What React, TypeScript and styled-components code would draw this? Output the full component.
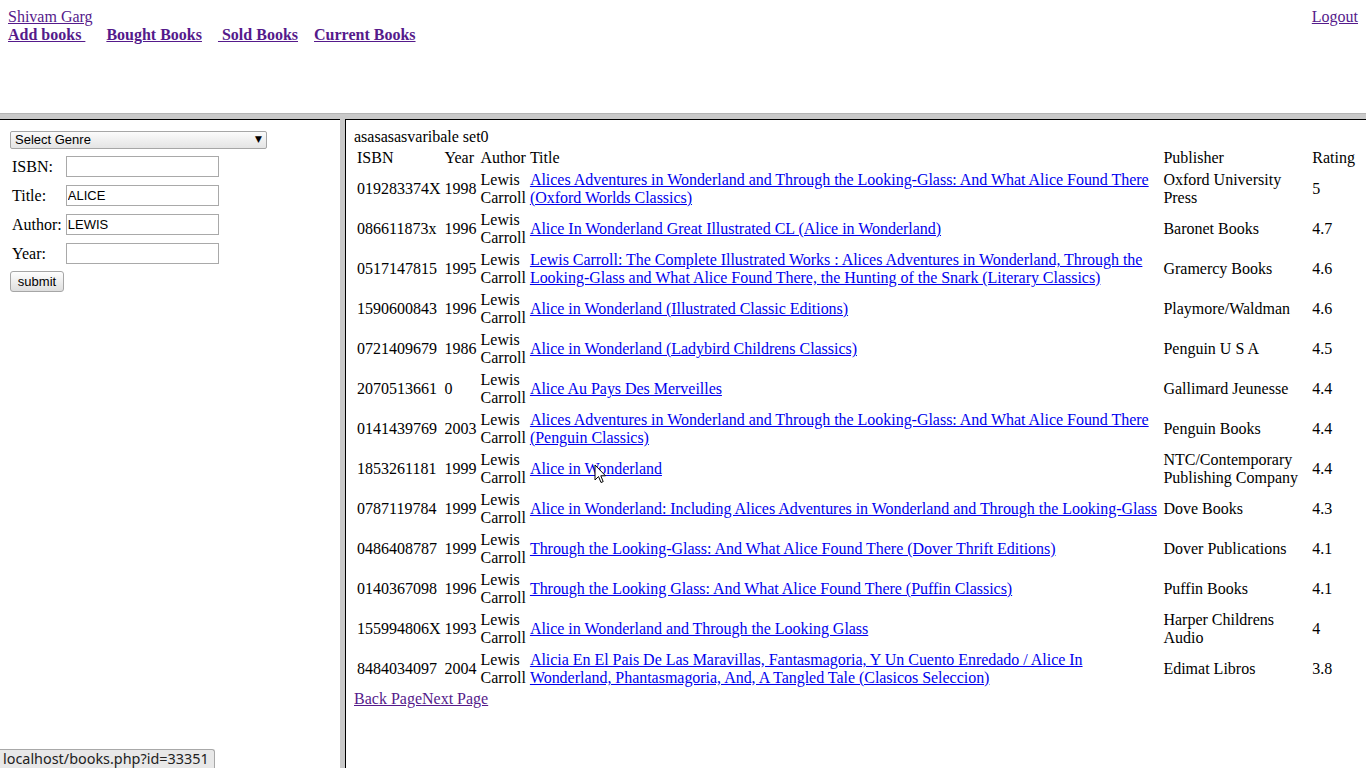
import React from "react";
import styled, { createGlobalStyle } from "styled-components";

const Global = createGlobalStyle`
  html, body { margin: 0; padding: 0; background: #fff; }
  body { font-family: "Liberation Serif", "Times New Roman", serif; font-size: 16px; color: #000; }
  #root { height: 768px; overflow: hidden; }
`;

const Page = styled.div`
  position: relative;
  height: 768px;
  display: flex;
  flex-direction: column;
  overflow: hidden;
`;

const TopFrame = styled.div`
  height: 113px;
  flex: none;
  padding: 8px;
  box-sizing: border-box;
  display: flex;
  justify-content: space-between;
  align-items: flex-start;
`;

const HBorder = styled.div`
  height: 6px;
  flex: none;
  background: #c9c9c9;
  border-top: 1px solid #b4b4b4;
  box-sizing: border-box;
`;

const Lower = styled.div`
  flex: 1;
  display: flex;
  min-height: 0;
`;

const LeftFrame = styled.div`
  width: 340px;
  flex: none;
  border-top: 1px solid #000;
  padding: 8px;
  box-sizing: border-box;
`;

const VBorder = styled.div`
  width: 5px;
  flex: none;
  background: #c9c9c9;
`;

const RightFrame = styled.div`
  flex: 1;
  border-top: 1px solid #000;
  border-left: 1px solid #000;
  padding: 8px;
  box-sizing: border-box;
  min-width: 0;
`;

const UserBlock = styled.div`
  display: flex;
  flex-direction: column;
  line-height: 18px;
`;

const Link = styled.a<{ $visited?: boolean }>`
  color: ${(p) => (p.$visited ? "#551a8b" : "#0000ee")};
  text-decoration: underline;
  cursor: pointer;
`;

const TitleLink = styled(Link)`
  letter-spacing: -0.03px;
`;

const NavRow = styled.div`
  white-space: pre;
`;

const NavLink = styled(Link)<{ $gap?: number }>`
  font-weight: bold;
  margin-left: ${(p) => p.$gap ?? 0}px;
`;

const GenreWrap = styled.div`
  position: relative;
  width: 257px;
  height: 18px;
  margin: 2px 2px 3px;
`;

const GenreSelect = styled.select`
  appearance: none;
  -webkit-appearance: none;
  width: 257px;
  height: 18px;
  box-sizing: border-box;
  margin: 0;
  padding: 0 0 0 4px;
  border: 1px solid #a6a6a6;
  border-radius: 2px;
  background: linear-gradient(#fbfbfb, #e4e4e4);
  font-family: "Liberation Sans", Arial, sans-serif;
  font-size: 13px;
  color: #000;
  outline: none;
`;

const Arrow = styled.span`
  position: absolute;
  right: 5px;
  top: 2px;
  font-family: "DejaVu Sans", sans-serif;
  font-size: 9px;
  line-height: 14px;
  pointer-events: none;
`;

const FormTable = styled.table`
  border-spacing: 2px;
  td { padding: 1px; }
`;

const Label = styled.td`
  white-space: nowrap;
  && { padding-left: 2px; }
`;

const TextInput = styled.input`
  width: 153px;
  height: 21px;
  box-sizing: border-box;
  margin: 2px 0;
  padding: 1px 1px;
  border: 1px solid #a9a9a9;
  font-family: "Liberation Sans", Arial, sans-serif;
  font-size: 13px;
  color: #000;
  outline: none;
  display: block;
`;

const SubmitButton = styled.button`
  width: 54px;
  height: 21px;
  margin: 2px 2px 0;
  padding: 0;
  border: 1px solid #a6a6a6;
  border-radius: 3px;
  background: linear-gradient(#fefefe, #dedede);
  font-family: "Liberation Sans", Arial, sans-serif;
  font-size: 13px;
  color: #000;
`;

const Caption = styled.div`
  line-height: 18px;
`;

const BookTable = styled.table`
  width: 100%;
  border-spacing: 2px;
  td { padding: 1px; line-height: 18px; vertical-align: middle; }
`;

const Cell = styled.td<{ $w?: number }>`
  width: ${(p) => (p.$w ? `${p.$w}px` : "1px")};
  white-space: ${(p) => (p.$w ? "normal" : "nowrap")};
`;

const AuthorCell = styled.td`
  width: 1px;
`;

const Pager = styled.div`
  line-height: 18px;
`;

const StatusBar = styled.div`
  position: absolute;
  left: 0;
  bottom: 0;
  height: 19px;
  padding: 0 5px 0 3px;
  background: #e8e8e8;
  border-top: 1px solid #a8a8a8;
  border-right: 1px solid #a8a8a8;
  border-top-right-radius: 3px;
  box-sizing: border-box;
  font-family: "Noto Sans", "DejaVu Sans", sans-serif;
  font-size: 14.4px;
  line-height: 18px;
  color: #222;
`;

const Cursor = styled.svg`
  position: absolute;
  left: 594px;
  top: 464px;
`;

type Book = [string, string, string, string, string];

const books: Book[] = [
  ["019283374X", "1998", "Alices Adventures in Wonderland and Through the Looking-Glass: And What Alice Found There (Oxford Worlds Classics)", "Oxford University Press", "5"],
  ["086611873x", "1996", "Alice In Wonderland Great Illustrated CL (Alice in Wonderland)", "Baronet Books", "4.7"],
  ["0517147815", "1995", "Lewis Carroll: The Complete Illustrated Works : Alices Adventures in Wonderland, Through the Looking-Glass and What Alice Found There, the Hunting of the Snark (Literary Classics)", "Gramercy Books", "4.6"],
  ["1590600843", "1996", "Alice in Wonderland (Illustrated Classic Editions)", "Playmore/Waldman", "4.6"],
  ["0721409679", "1986", "Alice in Wonderland (Ladybird Childrens Classics)", "Penguin U S A", "4.5"],
  ["2070513661", "0", "Alice Au Pays Des Merveilles", "Gallimard Jeunesse", "4.4"],
  ["0141439769", "2003", "Alices Adventures in Wonderland and Through the Looking-Glass: And What Alice Found There (Penguin Classics)", "Penguin Books", "4.4"],
  ["1853261181", "1999", "Alice in Wonderland", "NTC/Contemporary Publishing Company", "4.4"],
  ["0787119784", "1999", "Alice in Wonderland: Including Alices Adventures in Wonderland and Through the Looking-Glass", "Dove Books", "4.3"],
  ["0486408787", "1999", "Through the Looking-Glass: And What Alice Found There (Dover Thrift Editions)", "Dover Publications", "4.1"],
  ["0140367098", "1996", "Through the Looking Glass: And What Alice Found There (Puffin Classics)", "Puffin Books", "4.1"],
  ["155994806X", "1993", "Alice in Wonderland and Through the Looking Glass", "Harper Childrens Audio", "4"],
  ["8484034097", "2004", "Alicia En El Pais De Las Maravillas, Fantasmagoria, Y Un Cuento Enredado / Alice In Wonderland, Phantasmagoria, And, A Tangled Tale (Clasicos Seleccion)", "Edimat Libros", "3.8"],
];

export default function App() {
  return (
    <Page>
      <Global />
      <TopFrame>
        <UserBlock>
          <div><Link $visited>Shivam Garg</Link></div>
          <NavRow>
            <NavLink $visited>Add books </NavLink>
            <NavLink $visited $gap={21}>Bought Books</NavLink>
            <NavLink $visited $gap={16}> Sold Books</NavLink>
            <NavLink $visited $gap={16}>Current Books</NavLink>
          </NavRow>
        </UserBlock>
        <UserBlock>
          <Link $visited>Logout</Link>
        </UserBlock>
      </TopFrame>
      <HBorder />
      <Lower>
        <LeftFrame>
          <GenreWrap>
            <GenreSelect defaultValue="">
              <option value="">Select Genre</option>
            </GenreSelect>
            <Arrow>▼</Arrow>
          </GenreWrap>
          <FormTable>
            <tbody>
              <tr><Label>ISBN:</Label><td><TextInput defaultValue="" /></td></tr>
              <tr><Label>Title:</Label><td><TextInput defaultValue="ALICE" /></td></tr>
              <tr><Label>Author:</Label><td><TextInput defaultValue="LEWIS" /></td></tr>
              <tr><Label>Year:</Label><td><TextInput defaultValue="" /></td></tr>
            </tbody>
          </FormTable>
          <SubmitButton>submit</SubmitButton>
        </LeftFrame>
        <VBorder />
        <RightFrame>
          <Caption>asasasasvaribale set0</Caption>
          <BookTable>
            <tbody>
              <tr>
                <Cell>ISBN</Cell><Cell>Year</Cell><AuthorCell>Author</AuthorCell>
                <Cell $w={632}>Title</Cell><Cell $w={145}>Publisher</Cell><td>Rating</td>
              </tr>
              {books.map((b) => (
                <tr key={b[0]}>
                  <Cell>{b[0]}</Cell>
                  <Cell>{b[1]}</Cell>
                  <AuthorCell>Lewis Carroll</AuthorCell>
                  <Cell $w={632}><TitleLink>{b[2]}</TitleLink></Cell>
                  <Cell $w={145}>{b[3]}</Cell>
                  <td>{b[4]}</td>
                </tr>
              ))}
            </tbody>
          </BookTable>
          <Pager>
            <Link $visited>Back Page</Link><Link $visited>Next Page</Link>
          </Pager>
        </RightFrame>
      </Lower>
      <StatusBar>localhost/books.php?id=33351</StatusBar>
      <Cursor width="13" height="20" viewBox="0 0 13 20">
        <path d="M1 1 L1 16 L4.5 12.5 L7 18.5 L9.2 17.6 L6.8 11.8 L11.5 11.8 Z" fill="#fff" stroke="#000" strokeWidth="1" strokeLinejoin="round" />
      </Cursor>
    </Page>
  );
}
